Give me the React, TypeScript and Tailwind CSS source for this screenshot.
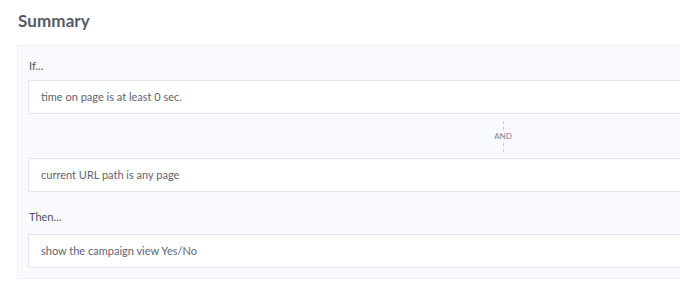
export default function App() {
    return (
        <div className="w-[680px] h-[285px] overflow-hidden bg-white" style={{ fontFamily: 'Lato, "Open Sans", sans-serif' }}>
            <div className="pl-[17px] pt-[9px]">
                <h2 className="text-[17px] font-bold text-[#575a68] leading-[24px] pl-[1px] tracking-[0.1px]">Summary</h2>
                <div className="mt-[12px] w-[972px] bg-[#f9fafe] border border-[#eef0f5] px-[10px] pb-[10px]">
                    <div className="h-[34px] flex items-end pb-[6px] pl-[1px] text-[11px] text-[#4f5261]">If...</div>
                    <div className="h-[34px] bg-white border border-[#e2e6f3] flex items-center pl-[12px] text-[11px] text-[#5f6372]">
                        time on page is at least 0 sec.
                    </div>
                    <div className="h-[44px] flex flex-col items-center justify-center">
                        <div className="h-[9px] border-l border-dashed border-[#c9ccd6]" />
                        <div className="text-[8px] leading-[13px] text-[#7d8090]">AND</div>
                        <div className="h-[9px] border-l border-dashed border-[#c9ccd6]" />
                    </div>
                    <div className="h-[34px] bg-white border border-[#e2e6f3] flex items-center pl-[12px] text-[11px] text-[#5f6372]">
                        current URL path is any page
                    </div>
                    <div className="h-[42px] flex items-end pb-[9px] pl-[1px] text-[11px] text-[#4f5261]">Then...</div>
                    <div className="h-[34px] bg-white border border-[#e2e6f3] flex items-center pl-[12px] text-[11px] text-[#5f6372]">
                        show the campaign view Yes/No
                    </div>
                </div>
            </div>
        </div>
    );
}
